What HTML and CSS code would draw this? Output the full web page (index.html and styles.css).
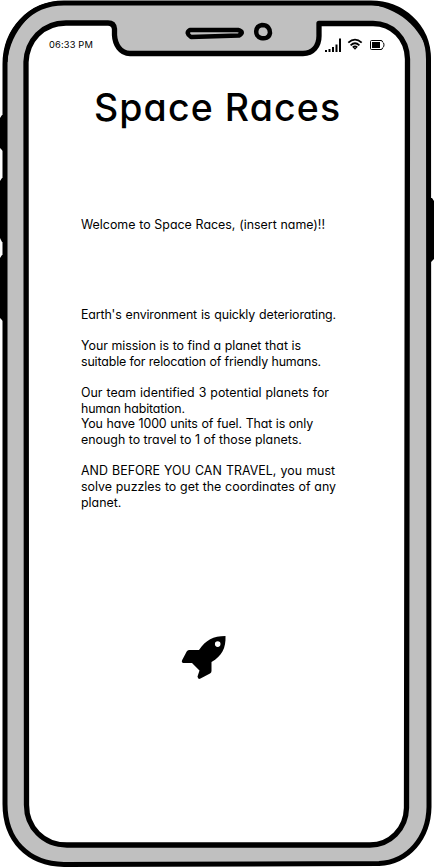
FILE: index.html
```html
<!DOCTYPE html>
<html lang="en">
<head>
<meta charset="utf-8">
<title>Space Races</title>
<link rel="stylesheet" href="styles.css">
</head>
<body>
<main class="phone">
  <svg class="frame" viewBox="0 0 434 867" aria-hidden="true">
    <path class="button" d="M5 115H2L0 118V148L3 151H6V178H2L0 181V238L2 242H6V255H2L0 258V318L3 321H6ZM428 198H432L434 201V259L431 262H428Z"/>
    <path class="shell" d="M5 64C5 31 29 3 64 3L371 3C401 3 428.500 25 428.500 59L429 807C428.500 838 408 862 379 863.500L64 864.500C28 864 5 840 5 804Z"/>
    <path class="edge" d="M3 62C4 27 31 1 61 1C35 5 10 30 7.500 62ZM373 1C407 3 430 27 431 62C424 31 403 10 373 5Z"/>
    <path class="screen" d="M26 62C27 41 42 23 66 23H108Q114 23 114.500 29V35C115 44 120 53.500 130 53.500H303C313 53.500 319 46 319 36V23.500H373C392 23.500 407 38 407.500 59L406.500 808C406 829 390 845 370 845H67C43 845 26.500 827 26.500 805Z"/>
    <path class="speaker" d="M190 30H238Q245 32 239 35.500L191 37Q185 33 190 30Z"/>
    <path class="camera" d="M262 25C268 25 270 29 270 33C269 38 265 39 261 38C254 36 255 26 262 25Z"/>
  </svg>
  <header class="status">
    <span class="time">06:33 PM</span>
    <svg class="signals" viewBox="0 0 62 18" aria-hidden="true">
      <path d="M1 14h2v2H1zM4.500 13h2v3h-2zM8 11h2v5H8zM11.500 8.500h2V16h-2zM15 2.500h2V16h-2z"/>
      <path class="wifi" d="M24.300 6.700Q31 .5 37.700 6.700M26.600 9.300Q31 5.200 35.400 9.300M28.800 11.500Q31 9.500 33.200 11.500"/>
      <path d="M29.500 12.300Q31 11.100 32.500 12.300L31 13.800Z"/>
      <path class="battery" d="M47.500 4.500H57Q58.500 4.500 58.500 6Q60 6.700 60 8.900Q60 11.200 58.500 11.900Q58.500 13.500 57 13.500H47.500Q46.500 13.500 46.500 12.500V5.500Q46.500 4.500 47.500 4.500Z"/>
      <path d="M48 6h8v6h-8z"/>
    </svg>
  </header>
  <h1 class="title">Space Races</h1>
  <p class="welcome"><span class="line w244">Welcome to Space Races, (insert name)!!</span></p>
  <section class="story">
    <p><span class="line tight w255">Earth's environment is quickly deteriorating.</span></p>
    <p><span class="line w220">Your mission is to find a planet that is</span>
    <span class="line tight w240">suitable for relocation of friendly humans.</span></p>
    <p><span class="line w248">Our team identified 3 potential planets for</span>
    <span class="line tight w101">human habitation.</span>
    <span class="line tight w232">You have 1000 units of fuel. That is only</span>
    <span class="line w220">enough to travel to 1 of those planets.</span></p>
    <p><span class="line w254">AND BEFORE YOU CAN TRAVEL, you must</span>
    <span class="line w255">solve puzzles to get the coordinates of any</span>
    <span class="line">planet.</span></p>
  </section>
  <svg class="rocket" viewBox="0 0 46 46" aria-hidden="true">
    <path fill-rule="evenodd" d="M44.500 1C32 1 25 5 18 15H8Q6.500 15 5.700 16.500L1.200 25Q0 27.500 2.500 28H11L18.500 35.500L16.500 41.500Q17 45 19.500 43.500L29 38.500Q30.500 37.500 30.500 36V27C41 21 45 13 44.500 1ZM36.700 6.300A2.800 2.800 0 1 1 36.700 11.900A2.800 2.800 0 1 1 36.700 6.300Z"/>
  </svg>
</main>
</body>
</html>
```

FILE: styles.css
```css
* { box-sizing: border-box; }
body { margin: 0; background: #fff; color: #000; font-family: Inter, "Liberation Sans", sans-serif; font-feature-settings: "cv11", "calt" 0; }
.phone { position: relative; width: 434px; height: 867px; overflow: hidden; }
.frame { position: absolute; inset: 0; width: 434px; height: 867px; z-index: -1; }
.shell { fill: #c0c0c0; stroke: #000; stroke-width: 5; }
.screen { fill: #fff; stroke: #000; stroke-width: 5.3; stroke-linejoin: round; }
.speaker, .camera { fill: #c0c0c0; stroke: #000; stroke-width: 4.5; stroke-linejoin: round; }
.status { display: flex; justify-content: space-between; height: 70px; padding: 36px 48px 0 49px; }
.time { font-size: 9.3px; line-height: 18px; letter-spacing: 0.15px; white-space: nowrap; }
.signals { width: 62px; height: 18px; }
.wifi { fill: none; stroke: #000; stroke-width: 1.8; }
.battery { fill: none; stroke: #000; stroke-width: 1; }
.title { margin: 15px 0 0 94px; font-size: 37.5px; line-height: 46px; height: 46px; font-weight: 450; letter-spacing: 1.1px; white-space: nowrap; }
.welcome { margin: 86px 0 0 81px; }
.welcome, .story { font-size: 12.4px; line-height: 15.650px; font-weight: 400; }
.story { height: 188px; margin: 74.200px 0 0 81px; }
.story p { margin: 0 0 15.650px; }
.line { display: block; white-space: nowrap; text-align: justify; text-align-last: justify; }
.tight { letter-spacing: -0.14px; }
.w101 { width: 101px; }
.w220 { width: 220px; }
.w232 { width: 232px; }
.w240 { width: 240px; }
.w244 { width: 244px; }
.w248 { width: 248px; }
.w254 { width: 254px; }
.w255 { width: 255px; }
.line:not([class*=" "]) { text-align-last: left; }
.rocket { display: block; width: 46px; height: 46px; margin: 139.800px 0 0 181px; }
```
